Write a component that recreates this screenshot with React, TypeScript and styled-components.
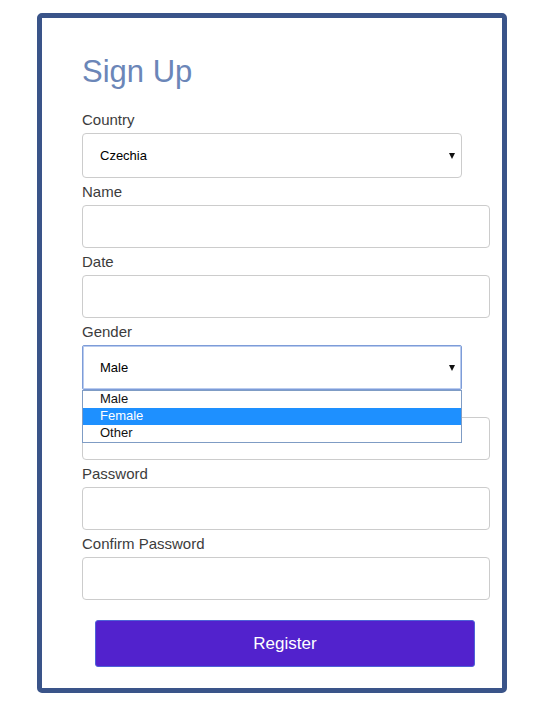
import React from "react";
import styled, { createGlobalStyle } from "styled-components";

const Global = createGlobalStyle`
  html, body { margin: 0; padding: 0; background: #ffffff; }
  body { font-family: "Liberation Sans", Arial, sans-serif; }
  * { box-sizing: border-box; }
`;

const Page = styled.div`
  padding: 13px 0 0 37px;
  height: 710px;
`;

const Card = styled.div`
  width: 470px;
  height: 680px;
  border: 5px solid #3a5489;
  border-radius: 5px;
  background: #fff;
  padding: 36px 12px 20px 40px;
  display: flex;
  flex-direction: column;
`;

const Title = styled.h1`
  margin: 0 0 21px;
  font-size: 31px;
  line-height: 36px;
  font-weight: 400;
  color: #6b86b8;
`;

const Field = styled.div`
  display: flex;
  flex-direction: column;
  margin-bottom: 5px;
  position: relative;
`;

const Label = styled.label<{ $covered?: boolean }>`
  font-size: 15px;
  line-height: 18px;
  color: #3c3c3c;
  margin-bottom: 4px;
  visibility: ${(p) => (p.$covered ? "hidden" : "visible")};
`;

const Input = styled.div`
  width: 408px;
  height: 43px;
  border: 1px solid #cccccc;
  border-radius: 4px;
  background: #fff;
`;

const SelectBox = styled.div<{ $focused?: boolean }>`
  position: relative;
  width: 380px;
  height: 45px;
  border: 1px solid ${(p) => (p.$focused ? "#7d9cd8" : "#cccccc")};
  border-radius: ${(p) => (p.$focused ? "2px" : "4px")};
  box-shadow: ${(p) => (p.$focused ? "inset 0 0 0 1px #b9cbee" : "none")};
  background: #fff;
  display: flex;
  align-items: center;
  padding: 0 0 0 17px;
  font-size: 13px;
  color: #000;
`;

const Arrow = styled.span`
  position: absolute;
  right: 6px;
  top: 50%;
  width: 0;
  height: 0;
  margin-top: -3px;
  border-left: 3.5px solid transparent;
  border-right: 3.5px solid transparent;
  border-top: 6px solid #111;
`;

const Dropdown = styled.ul`
  position: absolute;
  left: 0;
  top: 67px;
  width: 380px;
  margin: 0;
  padding: 0;
  list-style: none;
  border: 1px solid #7f9cc4;
  background: #fff;
  z-index: 2;
`;

const Option = styled.li<{ $active?: boolean }>`
  height: 17px;
  line-height: 16px;
  padding-left: 17px;
  font-size: 13px;
  color: ${(p) => (p.$active ? "#ffffff" : "#111")};
  background: ${(p) => (p.$active ? "#1e90ff" : "transparent")};
`;

const Button = styled.button`
  align-self: flex-start;
  margin: 15px 0 0 13px;
  width: 380px;
  height: 47px;
  border: 1px solid #4e62d8;
  border-radius: 3px;
  background: #5222cd;
  color: #fff;
  font-family: "Liberation Sans", Arial, sans-serif;
  font-size: 17px;
  cursor: pointer;
`;

export default function App() {
  return (
    <Page>
      <Global />
      <Card>
        <Title>Sign Up</Title>
        <Field>
          <Label>Country</Label>
          <SelectBox>
            Czechia
            <Arrow />
          </SelectBox>
        </Field>
        <Field>
          <Label>Name</Label>
          <Input />
        </Field>
        <Field>
          <Label>Date</Label>
          <Input />
        </Field>
        <Field>
          <Label>Gender</Label>
          <SelectBox $focused>
            Male
            <Arrow />
          </SelectBox>
          <Dropdown>
            <Option>Male</Option>
            <Option $active>Female</Option>
            <Option>Other</Option>
          </Dropdown>
        </Field>
        <Field>
          <Label $covered>Email</Label>
          <Input />
        </Field>
        <Field>
          <Label>Password</Label>
          <Input />
        </Field>
        <Field>
          <Label>Confirm Password</Label>
          <Input />
        </Field>
        <Button>Register</Button>
      </Card>
    </Page>
  );
}
